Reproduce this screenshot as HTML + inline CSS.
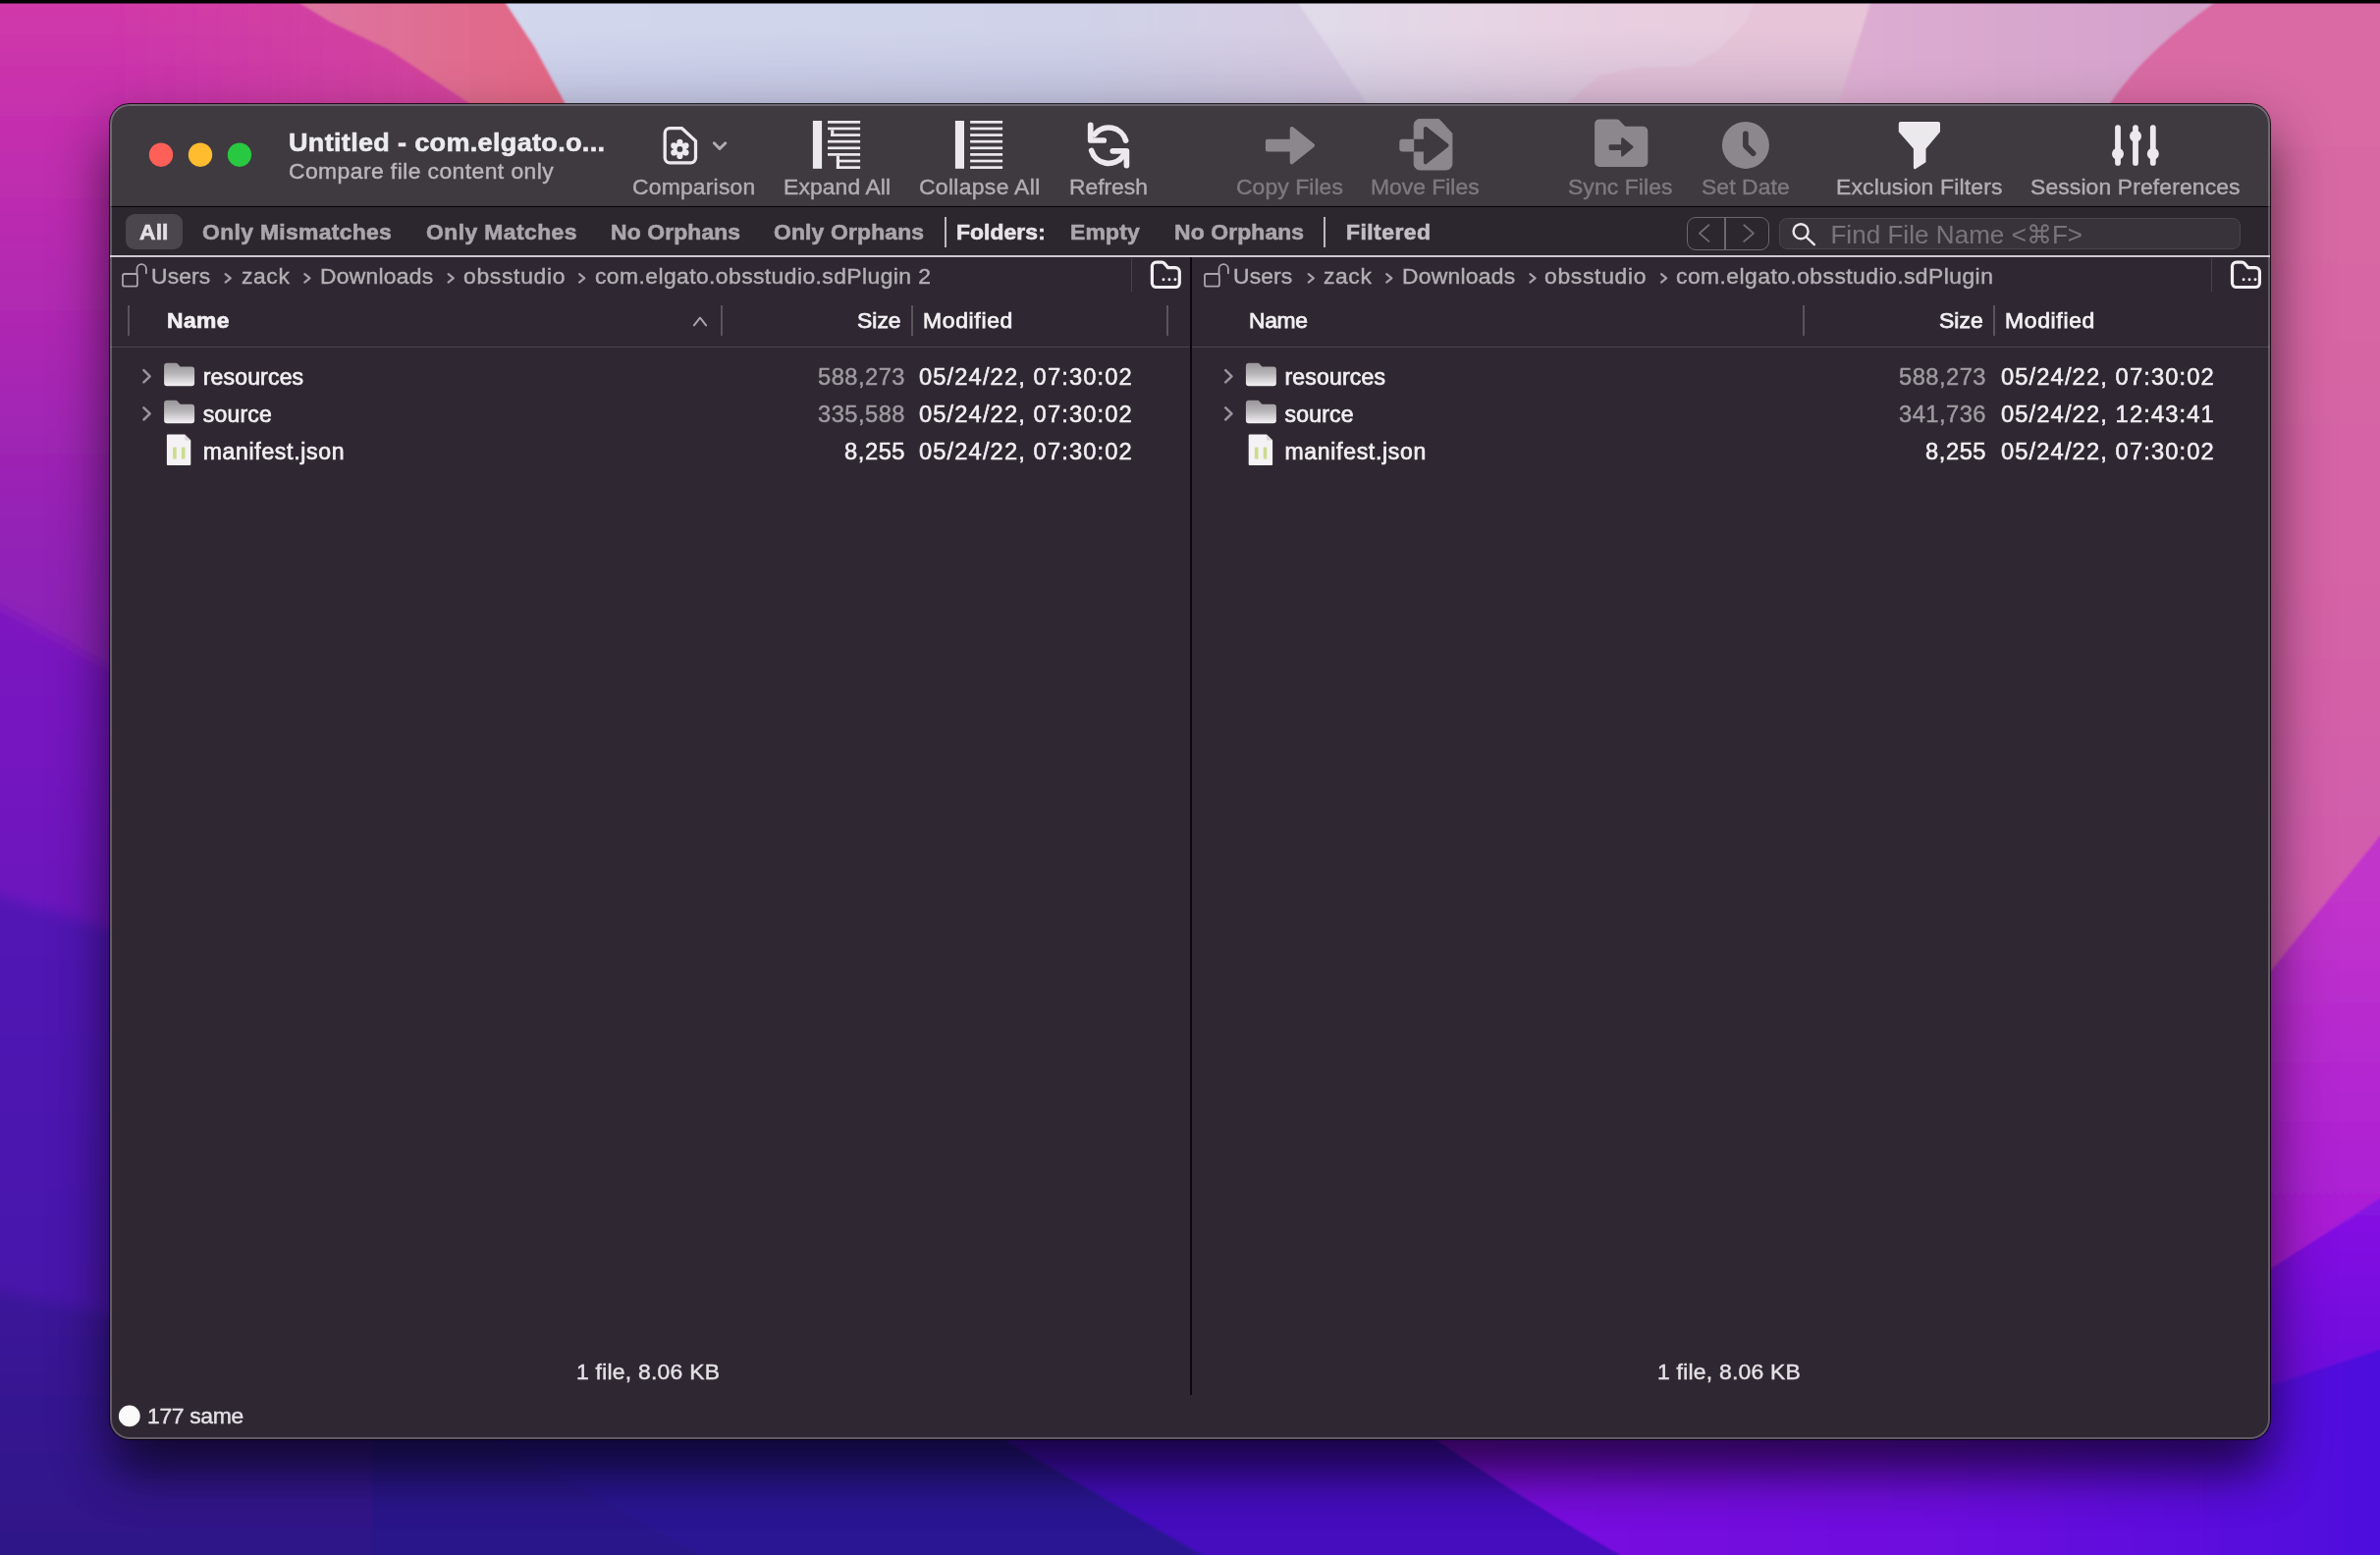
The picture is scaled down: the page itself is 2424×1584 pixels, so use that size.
<!DOCTYPE html>
<html><head><meta charset="utf-8"><title>Compare</title>
<style>
html,body{margin:0;padding:0;}
body{width:2424px;height:1584px;overflow:hidden;position:relative;background:#3a1590;font-family:"Liberation Sans",sans-serif;}
.t{position:absolute;white-space:pre;line-height:1;font-family:"Liberation Sans",sans-serif;transform-origin:0 50%;}
.abs{position:absolute;}
</style></head><body>
<svg class="abs" style="left:0;top:0" width="2424" height="1584" viewBox="0 0 2424 1584">
<defs>
<filter id="bl" x="-10%" y="-10%" width="120%" height="120%"><feGaussianBlur stdDeviation="7"/></filter>
<filter id="bs" x="-5%" y="-5%" width="110%" height="110%"><feGaussianBlur stdDeviation="1.2"/></filter>
<linearGradient id="gL1" gradientUnits="userSpaceOnUse" x1="0" y1="0" x2="0" y2="760"><stop offset="0" stop-color="#d13aa8"/><stop offset="0.13" stop-color="#c730ad"/><stop offset="0.43" stop-color="#ae28b2"/><stop offset="0.72" stop-color="#9322b6"/><stop offset="1" stop-color="#8520ba"/></linearGradient>
<linearGradient id="gL2" gradientUnits="userSpaceOnUse" x1="0" y1="620" x2="0" y2="960"><stop offset="0" stop-color="#7c19c1"/><stop offset="1" stop-color="#6a16be"/></linearGradient>
<linearGradient id="gL3" gradientUnits="userSpaceOnUse" x1="0" y1="910" x2="0" y2="1340"><stop offset="0" stop-color="#5215b5"/><stop offset="1" stop-color="#4712ab"/></linearGradient>
<linearGradient id="gL4" gradientUnits="userSpaceOnUse" x1="0" y1="1310" x2="0" y2="1584"><stop offset="0" stop-color="#3c1599"/><stop offset="1" stop-color="#2e1487"/></linearGradient>
<linearGradient id="gTm" gradientUnits="userSpaceOnUse" x1="112" y1="0" x2="480" y2="0"><stop offset="0" stop-color="#d4479a" stop-opacity="0"/><stop offset="1" stop-color="#d4479a" stop-opacity="0.9"/></linearGradient>
<linearGradient id="gSal" gradientUnits="userSpaceOnUse" x1="300" y1="0" x2="570" y2="0"><stop offset="0" stop-color="#dd75a2"/><stop offset="1" stop-color="#e26784"/></linearGradient>
<linearGradient id="gLav" gradientUnits="userSpaceOnUse" x1="520" y1="0" x2="1900" y2="0"><stop offset="0" stop-color="#d2d7ed"/><stop offset="0.42" stop-color="#cfd2e8"/><stop offset="0.6" stop-color="#d8cde2"/><stop offset="0.8" stop-color="#e1d3e4"/><stop offset="1" stop-color="#e6cbdf"/></linearGradient>
<linearGradient id="gPk" gradientUnits="userSpaceOnUse" x1="1880" y1="0" x2="2260" y2="0"><stop offset="0" stop-color="#ddadd1"/><stop offset="1" stop-color="#d3a0cb"/></linearGradient>
<linearGradient id="gR1" gradientUnits="userSpaceOnUse" x1="0" y1="0" x2="0" y2="1100"><stop offset="0" stop-color="#d96aa3"/><stop offset="0.6" stop-color="#d462a6"/><stop offset="0.82" stop-color="#d25cae"/><stop offset="1" stop-color="#cc52bc"/></linearGradient>
<linearGradient id="gR2" gradientUnits="userSpaceOnUse" x1="0" y1="900" x2="0" y2="1330"><stop offset="0" stop-color="#c235ca"/><stop offset="1" stop-color="#a318d8"/></linearGradient>
<linearGradient id="gR3" gradientUnits="userSpaceOnUse" x1="0" y1="1230" x2="0" y2="1420"><stop offset="0" stop-color="#8612e2"/><stop offset="1" stop-color="#6c0cde"/></linearGradient>
<linearGradient id="gB3" gradientUnits="userSpaceOnUse" x1="1450" y1="0" x2="2424" y2="0"><stop offset="0" stop-color="#7d0ade"/><stop offset="0.55" stop-color="#6d09de"/><stop offset="1" stop-color="#4e08dd"/></linearGradient>
<linearGradient id="gLt" gradientUnits="userSpaceOnUse" x1="1330" y1="0" x2="1900" y2="0"><stop offset="0" stop-color="#e0dcea"/><stop offset="0.27" stop-color="#e6d6e5"/><stop offset="0.52" stop-color="#e8cfe0"/><stop offset="1" stop-color="#e8c9dc"/></linearGradient>
<linearGradient id="gDk" gradientUnits="userSpaceOnUse" x1="0" y1="30" x2="0" y2="110"><stop offset="0" stop-color="#5a4a90" stop-opacity="0"/><stop offset="1" stop-color="#5a4a90" stop-opacity="0.13"/></linearGradient>
</defs>
<rect x="0" y="0" width="2424" height="1584" fill="#3a1596"/>
<!-- left column (soft edges) -->
<g filter="url(#bl)">
<rect x="-60" y="-60" width="800" height="900" fill="url(#gL1)"/>
<polygon points="-60,585 700,1005 700,1700 -60,1700" fill="url(#gL2)"/>
<polygon points="-60,895 1300,1296 1300,1700 -60,1700" fill="url(#gL3)"/>
<polygon points="-60,1301 1300,1604 1300,1700 -60,1700" fill="url(#gL4)"/>
</g>
<!-- bottom band -->
<g filter="url(#bs)">
<polygon points="380,1390 1300,1390 1300,1700 380,1700" fill="#2b158b"/>
<polygon points="470,1390 499,1464 713,1584 800,1640 1300,1640 1300,1390" fill="#2a1593"/>
<polygon points="880,1390 1018,1464 1212,1577 1300,1630 2500,1630 2500,1390" fill="#4511be"/>
<path d="M1355,1390 Q1500,1498 1650,1584 L1750,1640 L2500,1640 L2500,1390 Z" fill="url(#gB3)"/>
</g>
<!-- right column -->
<g filter="url(#bs)">
<rect x="2240" y="-20" width="260" height="1150" fill="url(#gR1)"/>
<polygon points="2240,1079 2500,757 2500,1450 2240,1450" fill="url(#gR2)"/>
<polygon points="2240,1339 2500,1172 2500,1500 2240,1500" fill="url(#gR3)"/>
<polygon points="2240,1435 2500,1350 2500,1700 2240,1700" fill="url(#gB3)"/>
</g>
<!-- top band -->
<g filter="url(#bs)">
<rect x="112" y="-10" width="420" height="150" fill="url(#gTm)"/>
<polygon points="290,-6 336,22 395,50 475,103 540,150 640,150 575,104 544,47 509,-6" fill="url(#gSal)"/>
<polygon points="509,-6 544,47 575,104 600,150 1900,150 1900,-6" fill="url(#gLav)"/>
<polygon points="1316,-6 1391,104 1430,150 1920,150 1920,-6" fill="url(#gLt)" opacity="0.92"/>
<polygon points="1575,150 1597,104 1629,77 1668,69 1720,68 1750,51 1779,21 1790,-6 1920,-6 1880,150" fill="#e6c3d7" opacity="0.85"/>
<polygon points="533,30 544,47 575,104 600,150 2000,150 2000,30" fill="url(#gDk)"/>
<polygon points="1908,-6 1873,104 1860,150 2300,150 2300,-6" fill="url(#gPk)"/>
<path d="M2268,-6 Q2185,50 2150,104 L2120,150 L2500,150 L2500,-6 Z" fill="#d96aa4"/>
</g>
<!-- black strip on top -->
<rect x="0" y="0" width="2424" height="3.5" fill="#000"/>
</svg>

<div class="abs" style="left:112px;top:106px;width:2200px;height:1360px;border-radius:20px;box-shadow:0 0 0 1px rgba(0,0,0,.8),0 38px 50px -8px rgba(0,0,0,.52),0 24px 60px 6px rgba(0,0,0,.29);"></div>
<div class="abs" style="left:112px;top:106px;width:2200px;height:1360px;border-radius:20px;overflow:hidden;background:#2f2731;">
<div class="abs" style="left:-112px;top:-106px;width:2424px;height:1584px;">
  <div class="abs" style="left:112px;top:105px;width:2200px;height:105px;background:#3e3a40;"></div>
  <div class="abs" style="left:112px;top:209.6px;width:2200px;height:1.6px;background:#050306;"></div>
  <div class="abs" style="left:112px;top:211.2px;width:2200px;height:49px;background:#2c262e;"></div>
  <div class="abs" style="left:112px;top:260px;width:2200px;height:2.2px;background:#cfc9d1;"></div>
  <div class="abs" style="left:112px;top:352.6px;width:2200px;height:1.3px;background:#4c464f;"></div>
  <div class="abs" style="left:1211.6px;top:262.2px;width:2.5px;height:1159px;background:#0b090c;"></div>
  <!-- All pill -->
  <div class="abs" style="left:128px;top:218px;width:58px;height:36px;border-radius:9px;background:#4b454e;"></div>
  <!-- filter separators -->
  <div class="abs" style="left:962px;top:221.4px;width:2px;height:31px;background:#bdb9bf;"></div>
  <div class="abs" style="left:1347.7px;top:221.4px;width:2px;height:31px;background:#bdb9bf;"></div>
  <!-- nav buttons -->
  <div class="abs" style="left:1718px;top:220.6px;width:83.6px;height:34.4px;border-radius:9px;box-sizing:border-box;border:1.8px solid #6c676e;"></div>
  <div class="abs" style="left:1756px;top:221px;width:1.8px;height:33.6px;background:#6c676e;"></div>
  <!-- search -->
  <div class="abs" style="left:1812px;top:222px;width:470px;height:31.7px;border-radius:8px;box-sizing:border-box;background:#38323a;border:1px solid #4a444c;"></div>
  <!-- path bar separators -->
  <div class="abs" style="left:1152px;top:263px;width:1.4px;height:34px;background:#47424b;"></div>
  <div class="abs" style="left:2252px;top:263px;width:1.4px;height:34px;background:#47424b;"></div>
  <!-- header separators -->
  <div class="abs" style="left:130px;top:310.6px;width:1.5px;height:31px;background:#5a545d;"></div>
  <div class="abs" style="left:734.2px;top:310.6px;width:1.5px;height:31px;background:#5a545d;"></div>
  <div class="abs" style="left:928.3px;top:310.6px;width:1.5px;height:31px;background:#5a545d;"></div>
  <div class="abs" style="left:1188.2px;top:310.6px;width:1.5px;height:31px;background:#5a545d;"></div>
  <div class="abs" style="left:1836.2px;top:310.6px;width:1.5px;height:31px;background:#5a545d;"></div>
  <div class="abs" style="left:2030.3px;top:310.6px;width:1.5px;height:31px;background:#5a545d;"></div>
</div>
<div class="abs" style="left:0;top:0;width:2200px;height:1360px;border-radius:20px;box-shadow:inset 0 0 0 2px rgba(238,228,246,.27);"></div>
</div>

<svg class="abs" style="left:0;top:0" width="2424" height="1584" viewBox="0 0 2424 1584">
<defs><linearGradient id="gFold" x1="0" y1="0" x2="0" y2="1"><stop offset="0" stop-color="#979598"/><stop offset="0.45" stop-color="#b6b4b7"/><stop offset="1" stop-color="#f4f2f5"/></linearGradient></defs>
<circle cx="164" cy="157.7" r="12.2" fill="#fe5f57"/>
<circle cx="204" cy="157.7" r="12.2" fill="#febc2e"/>
<circle cx="244" cy="157.7" r="12.2" fill="#28c840"/>
<path d="M682.2,130.7 H694.6 L708.5,143.6 V160.8 a5,5 0 0 1 -5,5 H682.2 a5,5 0 0 1 -5,-5 V135.7 a5,5 0 0 1 5,-5 Z" fill="none" stroke="#ebe9ec" stroke-width="3.3" stroke-linejoin="round"/>
<circle cx="692.4" cy="151.9" r="6.6" fill="#ebe9ec"/>
<circle cx="698.46" cy="155.40" r="3.1" fill="#ebe9ec"/>
<circle cx="692.40" cy="158.90" r="3.1" fill="#ebe9ec"/>
<circle cx="686.34" cy="155.40" r="3.1" fill="#ebe9ec"/>
<circle cx="686.34" cy="148.40" r="3.1" fill="#ebe9ec"/>
<circle cx="692.40" cy="144.90" r="3.1" fill="#ebe9ec"/>
<circle cx="698.46" cy="148.40" r="3.1" fill="#ebe9ec"/>
<circle cx="692.4" cy="151.9" r="2.9" fill="#3e3a40"/>
<path d="M727.3,145.8 L733,151.5 L738.8,145.8" fill="none" stroke="#b1aeb3" stroke-width="3" stroke-linecap="round" stroke-linejoin="round"/>
<g fill="#ebe9ec">
<rect x="827.9" y="123" width="9.2" height="48.8"/>
<rect x="843.0" y="123.00" width="33.1" height="2.7"/>
<rect x="843.0" y="129.61" width="33.1" height="2.7"/>
<rect x="846.2" y="136.22" width="29.9" height="2.7"/>
<rect x="843.0" y="142.83" width="33.1" height="2.7"/>
<rect x="843.0" y="149.44" width="33.1" height="2.7"/>
<rect x="843.0" y="156.05" width="33.1" height="2.7"/>
<rect x="851.9" y="162.66" width="24.2" height="2.7"/>
<rect x="851.9" y="169.27" width="24.2" height="2.7"/>
<rect x="846.2" y="132.31" width="3.1" height="6.61"/>
<rect x="851.9" y="158.75" width="3.1" height="13.22"/>
<rect x="972.9" y="123" width="9.1" height="48.8"/>
<rect x="988.1" y="123.00" width="33" height="2.7"/>
<rect x="988.1" y="129.61" width="33" height="2.7"/>
<rect x="988.1" y="136.22" width="33" height="2.7"/>
<rect x="988.1" y="142.83" width="33" height="2.7"/>
<rect x="988.1" y="149.44" width="33" height="2.7"/>
<rect x="988.1" y="156.05" width="33" height="2.7"/>
<rect x="988.1" y="162.66" width="33" height="2.7"/>
<rect x="988.1" y="169.27" width="33" height="2.7"/>
</g>
<g fill="none" stroke="#ebe9ec" stroke-width="5.7" stroke-linecap="round" stroke-linejoin="round">
<path d="M1114.73,137.03 A18.2,18.2 0 0 1 1146.58,143.12"/>
<path d="M1111.68,153.48 A18.2,18.2 0 0 0 1143.94,158.73"/>
<path d="M1110.7,127.3 V143 H1124.3"/>
<path d="M1133.3,153.8 H1147.4 V168.6"/>
</g>
<g fill="#8b878c" stroke="#8b878c" stroke-width="4" stroke-linejoin="round">
<rect x="1290.9" y="143.8" width="25" height="8.7"/>
<path d="M1315.7,130.9 L1337,148.1 L1315.7,165.3 Z"/>
</g>
<path d="M1446.2,121.4 H1465.6 L1478.9,135.9 V167 a6,6 0 0 1 -6,6 H1446.2 a6,6 0 0 1 -6,-6 V127.4 a6,6 0 0 1 6,-6 Z" fill="#8b878c" stroke="#8b878c" stroke-width="1" stroke-linejoin="round"/>
<g fill="#3e3a40" stroke="#3e3a40" stroke-width="4" stroke-linejoin="round">
<rect x="1436" y="143.8" width="16" height="8.7"/>
<path d="M1451.9,130.9 L1473.6,148.1 L1451.9,165.3 Z"/>
</g>
<path d="M1428.3,141.8 H1440.2 V154.5 H1428.3 a3,3 0 0 1 -3,-3 V144.8 a3,3 0 0 1 3,-3 Z" fill="#8b878c"/>
<path d="M1629.1,121.4 H1646.5 a4,4 0 0 1 3,1.3 L1655.2,128.7 H1673.3 a5,5 0 0 1 5,5 V164.9 a5,5 0 0 1 -5,5 H1629.1 a5,5 0 0 1 -5,-5 V126.4 a5,5 0 0 1 5,-5 Z" fill="#8b878c"/>
<g fill="#3e3a40" stroke="#3e3a40" stroke-width="2.6" stroke-linejoin="round">
<rect x="1639.9" y="148.5" width="13" height="3.1"/>
<path d="M1652.4,141.5 L1662.2,149.8 L1652.4,158.1 Z"/>
</g>
<circle cx="1777.9" cy="147.9" r="24" fill="#8b878c"/>
<path d="M1777.9,136.3 V148.6 L1785.6,156.2" fill="none" stroke="#3e3a40" stroke-width="5.7" stroke-linecap="round" stroke-linejoin="round"/>
<path d="M1935.8,123.9 H1974 a2,2 0 0 1 2,2 V134.2 L1961.5,151.6 V165.2 L1951,172 a1.4,1.4 0 0 1 -2.1,-1.2 V151.6 L1933.8,134.2 V125.9 a2,2 0 0 1 2,-2 Z" fill="#ebe9ec"/>
<g stroke="#ebe9ec" stroke-width="5.8" stroke-linecap="round">
<path d="M2157,130.1 V165.9"/>
<path d="M2175,130.1 V165.9"/>
<path d="M2192.8,130.1 V165.9"/>
</g>
<circle cx="2157" cy="156.8" r="6" fill="#ebe9ec"/>
<circle cx="2175" cy="138.8" r="6" fill="#ebe9ec"/>
<circle cx="2192.8" cy="156.8" r="6" fill="#ebe9ec"/>
<g fill="none" stroke="#706b73" stroke-width="1.9" stroke-linecap="round" stroke-linejoin="round">
<path d="M1740.4,229.3 L1730.9,237.6 L1740.4,245.9"/>
<path d="M1776.3,229.3 L1785.9,237.6 L1776.3,245.9"/>
</g>
<g fill="none" stroke="#e9e7eb" stroke-width="2.4" stroke-linecap="round">
<circle cx="1834.1" cy="235.7" r="7.5"/>
<path d="M1839.7,241.5 L1847.8,249.2"/>
</g>
<g fill="none" stroke="#aaa5ad" stroke-width="1.8" stroke-linecap="round">
<rect x="125.0" y="279" width="14.9" height="12.7" rx="2"/>
<path d="M139.5,279 V273.9 a4.7,4.7 0 0 1 9.4,0 V278.3"/>
</g>
<g fill="none" stroke="#aaa5ad" stroke-width="1.8" stroke-linecap="round">
<rect x="1227.0" y="279" width="14.9" height="12.7" rx="2"/>
<path d="M1241.5,279 V273.9 a4.7,4.7 0 0 1 9.4,0 V278.3"/>
</g>
<g fill="none" stroke="#a6a1a9" stroke-width="2.2" stroke-linecap="round" stroke-linejoin="round">
<path d="M229.6,279.2 L234.8,283.4 L229.6,287.6"/>
<path d="M310.3,279.2 L315.5,283.4 L310.3,287.6"/>
<path d="M456.6,279.2 L461.8,283.4 L456.6,287.6"/>
<path d="M590.1,279.2 L595.3,283.4 L590.1,287.6"/>
<path d="M1332.7,279.2 L1337.9,283.4 L1332.7,287.6"/>
<path d="M1412.2,279.2 L1417.4,283.4 L1412.2,287.6"/>
<path d="M1558.4,279.2 L1563.6,283.4 L1558.4,287.6"/>
<path d="M1692.0,279.2 L1697.2,283.4 L1692.0,287.6"/>
</g>
<path d="M1177.6,267.1 H1183.5 a3,3 0 0 1 2.2,1 L1189.6,272.6 H1197.1 a4.2,4.2 0 0 1 4.2,4.2 V288.3 a4.2,4.2 0 0 1 -4.2,4.2 H1177.6 a4.2,4.2 0 0 1 -4.2,-4.2 V271.3 a4.2,4.2 0 0 1 4.2,-4.2 Z" fill="none" stroke="#f1eff2" stroke-width="3.2" stroke-linejoin="round"/>
<circle cx="1185.0" cy="284.7" r="1.45" fill="#f1eff2"/>
<circle cx="1190.9" cy="284.7" r="1.45" fill="#f1eff2"/>
<circle cx="1196.9" cy="284.7" r="1.45" fill="#f1eff2"/>
<path d="M2277.7,267.1 H2283.6 a3,3 0 0 1 2.2,1 L2289.7,272.6 H2297.2 a4.2,4.2 0 0 1 4.2,4.2 V288.3 a4.2,4.2 0 0 1 -4.2,4.2 H2277.7 a4.2,4.2 0 0 1 -4.2,-4.2 V271.3 a4.2,4.2 0 0 1 4.2,-4.2 Z" fill="none" stroke="#f1eff2" stroke-width="3.2" stroke-linejoin="round"/>
<circle cx="2285.1" cy="284.7" r="1.45" fill="#f1eff2"/>
<circle cx="2291.0" cy="284.7" r="1.45" fill="#f1eff2"/>
<circle cx="2297.0" cy="284.7" r="1.45" fill="#f1eff2"/>
<path d="M706.9,331.4 L713,323.7 L719.1,331.4" fill="none" stroke="#a9a5ab" stroke-width="2" stroke-linecap="round" stroke-linejoin="round"/>
<path d="M146.4,377.2 L152.7,383.3 L146.4,389.4" fill="none" stroke="#9a949c" stroke-width="2.5" stroke-linecap="round" stroke-linejoin="round"/>
<path d="M169.6,369.7 h9.5 a2,2 0 0 1 1.5,.6 l3,3.3 h11.5 a3,3 0 0 1 3,3 v13.6 a3,3 0 0 1 -3,3 h-25 a3,3 0 0 1 -3,-3 v-17.5 a3,3 0 0 1 3,-3 Z" fill="url(#gFold)"/>
<path d="M146.4,415.3 L152.7,421.4 L146.4,427.5" fill="none" stroke="#9a949c" stroke-width="2.5" stroke-linecap="round" stroke-linejoin="round"/>
<path d="M169.6,407.8 h9.5 a2,2 0 0 1 1.5,.6 l3,3.3 h11.5 a3,3 0 0 1 3,3 v13.6 a3,3 0 0 1 -3,3 h-25 a3,3 0 0 1 -3,-3 v-17.5 a3,3 0 0 1 3,-3 Z" fill="url(#gFold)"/>
<path d="M170.9,442.4 h17.2 l6.2,6.2 v24.3 a1,1 0 0 1 -1,1 h-22.4 a1,1 0 0 1 -1,-1 v-29.5 a1,1 0 0 1 1,-1 Z" fill="#f4f2f4"/>
<path d="M188.1,442.4 v6.2 h6.2 Z" fill="#d9d6da"/>
<rect x="176.1" y="455.6" width="3.6" height="12" rx="1.2" fill="#cbdc8c"/>
<rect x="184.9" y="455.6" width="3.6" height="12" rx="1.2" fill="#cbdc8c"/>
<path d="M1248.2,377.2 L1254.5,383.3 L1248.2,389.4" fill="none" stroke="#9a949c" stroke-width="2.5" stroke-linecap="round" stroke-linejoin="round"/>
<path d="M1271.4,369.7 h9.5 a2,2 0 0 1 1.5,.6 l3,3.3 h11.5 a3,3 0 0 1 3,3 v13.6 a3,3 0 0 1 -3,3 h-25 a3,3 0 0 1 -3,-3 v-17.5 a3,3 0 0 1 3,-3 Z" fill="url(#gFold)"/>
<path d="M1248.2,415.3 L1254.5,421.4 L1248.2,427.5" fill="none" stroke="#9a949c" stroke-width="2.5" stroke-linecap="round" stroke-linejoin="round"/>
<path d="M1271.4,407.8 h9.5 a2,2 0 0 1 1.5,.6 l3,3.3 h11.5 a3,3 0 0 1 3,3 v13.6 a3,3 0 0 1 -3,3 h-25 a3,3 0 0 1 -3,-3 v-17.5 a3,3 0 0 1 3,-3 Z" fill="url(#gFold)"/>
<path d="M1272.7,442.4 h17.2 l6.2,6.2 v24.3 a1,1 0 0 1 -1,1 h-22.4 a1,1 0 0 1 -1,-1 v-29.5 a1,1 0 0 1 1,-1 Z" fill="#f4f2f4"/>
<path d="M1289.9,442.4 v6.2 h6.2 Z" fill="#d9d6da"/>
<rect x="1277.9" y="455.6" width="3.6" height="12" rx="1.2" fill="#cbdc8c"/>
<rect x="1286.7" y="455.6" width="3.6" height="12" rx="1.2" fill="#cbdc8c"/>
<circle cx="131.8" cy="1442.4" r="10.9" fill="#fbfafb"/>
</svg>
<div class="abs" style="left:0;top:0;width:2424px;height:1584px;will-change:transform;">
<span class="t" style="left:294.0px;top:132.0px;font-size:26px;color:#ecebed;letter-spacing:0.31px;font-weight:700;-webkit-text-stroke:0.60px #ecebed;transform:scaleX(1.040);">Untitled - com.elgato.o...</span>
<span class="t" style="left:294.1px;top:164.0px;font-size:22px;color:#bab7bc;letter-spacing:0.41px;-webkit-text-stroke:0.42px #bab7bc;transform:scaleX(1.040);">Compare file content only</span>
<span class="t" style="left:644.0px;top:180.0px;font-size:22px;color:#b1aeb3;letter-spacing:0.20px;-webkit-text-stroke:0.42px #b1aeb3;transform:scaleX(1.040);">Comparison</span>
<span class="t" style="left:798.0px;top:180.0px;font-size:22px;color:#b1aeb3;letter-spacing:0.11px;-webkit-text-stroke:0.42px #b1aeb3;transform:scaleX(1.040);">Expand All</span>
<span class="t" style="left:936.1px;top:180.0px;font-size:22px;color:#b1aeb3;letter-spacing:0.32px;-webkit-text-stroke:0.42px #b1aeb3;transform:scaleX(1.040);">Collapse All</span>
<span class="t" style="left:1089.3px;top:180.0px;font-size:22px;color:#b1aeb3;letter-spacing:-0.04px;-webkit-text-stroke:0.42px #b1aeb3;transform:scaleX(1.040);">Refresh</span>
<span class="t" style="left:1259.0px;top:180.0px;font-size:22px;color:#7d797f;letter-spacing:0.08px;-webkit-text-stroke:0.42px #7d797f;transform:scaleX(1.040);">Copy Files</span>
<span class="t" style="left:1396.4px;top:180.0px;font-size:22px;color:#7d797f;letter-spacing:0.00px;-webkit-text-stroke:0.42px #7d797f;transform:scaleX(1.040);">Move Files</span>
<span class="t" style="left:1596.7px;top:180.0px;font-size:22px;color:#7d797f;letter-spacing:0.10px;-webkit-text-stroke:0.42px #7d797f;transform:scaleX(1.040);">Sync Files</span>
<span class="t" style="left:1733.1px;top:180.0px;font-size:22px;color:#7d797f;letter-spacing:0.10px;-webkit-text-stroke:0.42px #7d797f;transform:scaleX(1.040);">Set Date</span>
<span class="t" style="left:1870.3px;top:180.0px;font-size:22px;color:#b1aeb3;letter-spacing:0.17px;-webkit-text-stroke:0.42px #b1aeb3;transform:scaleX(1.040);">Exclusion Filters</span>
<span class="t" style="left:2067.8px;top:180.0px;font-size:22px;color:#b1aeb3;letter-spacing:0.13px;-webkit-text-stroke:0.42px #b1aeb3;transform:scaleX(1.040);">Session Preferences</span>
<span class="t" style="left:141.9px;top:226.0px;font-size:22px;color:#e2dfe4;letter-spacing:0.10px;font-weight:700;-webkit-text-stroke:0.60px #e2dfe4;transform:scaleX(1.040);">All</span>
<span class="t" style="left:206.1px;top:226.0px;font-size:22px;color:#aaa6ac;letter-spacing:0.32px;font-weight:700;-webkit-text-stroke:0.60px #aaa6ac;transform:scaleX(1.040);">Only Mismatches</span>
<span class="t" style="left:433.8px;top:226.0px;font-size:22px;color:#aaa6ac;letter-spacing:0.41px;font-weight:700;-webkit-text-stroke:0.60px #aaa6ac;transform:scaleX(1.040);">Only Matches</span>
<span class="t" style="left:621.8px;top:226.0px;font-size:22px;color:#aaa6ac;letter-spacing:0.12px;font-weight:700;-webkit-text-stroke:0.60px #aaa6ac;transform:scaleX(1.040);">No Orphans</span>
<span class="t" style="left:788.1px;top:226.0px;font-size:22px;color:#aaa6ac;letter-spacing:0.15px;font-weight:700;-webkit-text-stroke:0.60px #aaa6ac;transform:scaleX(1.040);">Only Orphans</span>
<span class="t" style="left:973.9px;top:226.0px;font-size:22px;color:#e8e5ea;letter-spacing:0.07px;font-weight:700;-webkit-text-stroke:0.60px #e8e5ea;transform:scaleX(1.040);">Folders:</span>
<span class="t" style="left:1090.1px;top:226.0px;font-size:22px;color:#aaa6ac;letter-spacing:0.20px;font-weight:700;-webkit-text-stroke:0.60px #aaa6ac;transform:scaleX(1.040);">Empty</span>
<span class="t" style="left:1195.8px;top:226.0px;font-size:22px;color:#aaa6ac;letter-spacing:0.12px;font-weight:700;-webkit-text-stroke:0.60px #aaa6ac;transform:scaleX(1.040);">No Orphans</span>
<span class="t" style="left:1370.5px;top:226.0px;font-size:22px;color:#c2bec4;letter-spacing:0.46px;font-weight:700;-webkit-text-stroke:0.60px #c2bec4;transform:scaleX(1.040);">Filtered</span>
<span class="t" style="left:1864.4px;top:226.0px;font-size:26px;color:#77737a;letter-spacing:0.05px;-webkit-text-stroke:0.10px #77737a;">Find File Name &lt;⌘F&gt;</span>
<span class="t" style="left:154.0px;top:271.0px;font-size:22px;color:#b3afb5;letter-spacing:0.12px;-webkit-text-stroke:0.42px #b3afb5;transform:scaleX(1.040);">Users</span>
<span class="t" style="left:246.0px;top:271.0px;font-size:22px;color:#b3afb5;letter-spacing:0.58px;-webkit-text-stroke:0.42px #b3afb5;transform:scaleX(1.040);">zack</span>
<span class="t" style="left:325.9px;top:271.0px;font-size:22px;color:#b3afb5;letter-spacing:0.24px;-webkit-text-stroke:0.42px #b3afb5;transform:scaleX(1.040);">Downloads</span>
<span class="t" style="left:471.6px;top:271.0px;font-size:22px;color:#b3afb5;letter-spacing:0.67px;-webkit-text-stroke:0.42px #b3afb5;transform:scaleX(1.040);">obsstudio</span>
<span class="t" style="left:1255.7px;top:271.0px;font-size:22px;color:#b3afb5;letter-spacing:0.12px;-webkit-text-stroke:0.42px #b3afb5;transform:scaleX(1.040);">Users</span>
<span class="t" style="left:1347.7px;top:271.0px;font-size:22px;color:#b3afb5;letter-spacing:0.58px;-webkit-text-stroke:0.42px #b3afb5;transform:scaleX(1.040);">zack</span>
<span class="t" style="left:1427.6px;top:271.0px;font-size:22px;color:#b3afb5;letter-spacing:0.24px;-webkit-text-stroke:0.42px #b3afb5;transform:scaleX(1.040);">Downloads</span>
<span class="t" style="left:1573.3px;top:271.0px;font-size:22px;color:#b3afb5;letter-spacing:0.67px;-webkit-text-stroke:0.42px #b3afb5;transform:scaleX(1.040);">obsstudio</span>
<span class="t" style="left:605.6px;top:271.0px;font-size:22px;color:#b3afb5;letter-spacing:0.40px;-webkit-text-stroke:0.42px #b3afb5;transform:scaleX(1.040);">com.elgato.obsstudio.sdPlugin 2</span>
<span class="t" style="left:1707.4px;top:271.0px;font-size:22px;color:#b3afb5;letter-spacing:0.43px;-webkit-text-stroke:0.42px #b3afb5;transform:scaleX(1.040);">com.elgato.obsstudio.sdPlugin</span>
<span class="t" style="left:169.6px;top:316.0px;font-size:22px;color:#f2f0f3;letter-spacing:0.40px;font-weight:700;-webkit-text-stroke:0.60px #f2f0f3;transform:scaleX(1.040);">Name</span>
<span class="t" style="left:873.4px;top:316.0px;font-size:22px;color:#f2f0f3;letter-spacing:0.02px;-webkit-text-stroke:0.75px #f2f0f3;transform:scaleX(1.040);">Size</span>
<span class="t" style="left:940.2px;top:316.0px;font-size:22px;color:#f2f0f3;letter-spacing:0.66px;-webkit-text-stroke:0.75px #f2f0f3;transform:scaleX(1.040);">Modified</span>
<span class="t" style="left:1272.0px;top:316.0px;font-size:22px;color:#f2f0f3;letter-spacing:-0.34px;-webkit-text-stroke:0.75px #f2f0f3;transform:scaleX(1.040);">Name</span>
<span class="t" style="left:1975.1px;top:316.0px;font-size:22px;color:#f2f0f3;letter-spacing:0.05px;-webkit-text-stroke:0.75px #f2f0f3;transform:scaleX(1.040);">Size</span>
<span class="t" style="left:2041.9px;top:316.0px;font-size:22px;color:#f2f0f3;letter-spacing:0.66px;-webkit-text-stroke:0.75px #f2f0f3;transform:scaleX(1.040);">Modified</span>
<span class="t" style="left:206.7px;top:373.0px;font-size:23px;color:#f1eff2;letter-spacing:0.18px;-webkit-text-stroke:0.70px #f1eff2;">resources</span>
<span class="t" style="left:206.7px;top:411.0px;font-size:23px;color:#f1eff2;letter-spacing:0.22px;-webkit-text-stroke:0.70px #f1eff2;">source</span>
<span class="t" style="left:206.7px;top:449.0px;font-size:23px;color:#f1eff2;letter-spacing:0.69px;-webkit-text-stroke:0.70px #f1eff2;">manifest.json</span>
<span class="t" style="left:832.5px;top:373.0px;font-size:23px;color:#9e9aa0;letter-spacing:0.47px;-webkit-text-stroke:0.45px #9e9aa0;transform:scaleX(1.030);">588,273</span>
<span class="t" style="left:832.5px;top:411.0px;font-size:23px;color:#9e9aa0;letter-spacing:0.47px;-webkit-text-stroke:0.45px #9e9aa0;transform:scaleX(1.030);">335,588</span>
<span class="t" style="left:859.5px;top:449.0px;font-size:23px;color:#f1eff2;letter-spacing:0.55px;-webkit-text-stroke:0.55px #f1eff2;transform:scaleX(1.030);">8,255</span>
<span class="t" style="left:935.9px;top:373.0px;font-size:23px;color:#f1eff2;letter-spacing:1.09px;-webkit-text-stroke:0.55px #f1eff2;transform:scaleX(1.030);">05/24/22, 07:30:02</span>
<span class="t" style="left:935.9px;top:411.0px;font-size:23px;color:#f1eff2;letter-spacing:1.09px;-webkit-text-stroke:0.55px #f1eff2;transform:scaleX(1.030);">05/24/22, 07:30:02</span>
<span class="t" style="left:935.9px;top:449.0px;font-size:23px;color:#f1eff2;letter-spacing:1.09px;-webkit-text-stroke:0.55px #f1eff2;transform:scaleX(1.030);">05/24/22, 07:30:02</span>
<span class="t" style="left:1308.5px;top:373.0px;font-size:23px;color:#f1eff2;letter-spacing:0.18px;-webkit-text-stroke:0.70px #f1eff2;">resources</span>
<span class="t" style="left:1308.5px;top:411.0px;font-size:23px;color:#f1eff2;letter-spacing:0.22px;-webkit-text-stroke:0.70px #f1eff2;">source</span>
<span class="t" style="left:1308.5px;top:449.0px;font-size:23px;color:#f1eff2;letter-spacing:0.69px;-webkit-text-stroke:0.70px #f1eff2;">manifest.json</span>
<span class="t" style="left:1934.3px;top:373.0px;font-size:23px;color:#9e9aa0;letter-spacing:0.47px;-webkit-text-stroke:0.45px #9e9aa0;transform:scaleX(1.030);">588,273</span>
<span class="t" style="left:1934.3px;top:411.0px;font-size:23px;color:#9e9aa0;letter-spacing:0.47px;-webkit-text-stroke:0.45px #9e9aa0;transform:scaleX(1.030);">341,736</span>
<span class="t" style="left:1961.3px;top:449.0px;font-size:23px;color:#f1eff2;letter-spacing:0.55px;-webkit-text-stroke:0.55px #f1eff2;transform:scaleX(1.030);">8,255</span>
<span class="t" style="left:2037.7px;top:373.0px;font-size:23px;color:#f1eff2;letter-spacing:1.09px;-webkit-text-stroke:0.55px #f1eff2;transform:scaleX(1.030);">05/24/22, 07:30:02</span>
<span class="t" style="left:2037.7px;top:411.0px;font-size:23px;color:#f1eff2;letter-spacing:1.09px;-webkit-text-stroke:0.55px #f1eff2;transform:scaleX(1.030);">05/24/22, 12:43:41</span>
<span class="t" style="left:2037.7px;top:449.0px;font-size:23px;color:#f1eff2;letter-spacing:1.09px;-webkit-text-stroke:0.55px #f1eff2;transform:scaleX(1.030);">05/24/22, 07:30:02</span>
<span class="t" style="left:586.7px;top:1387.0px;font-size:22px;color:#e4e1e6;letter-spacing:0.24px;-webkit-text-stroke:0.42px #e4e1e6;transform:scaleX(1.040);">1 file, 8.06 KB</span>
<span class="t" style="left:1688.3px;top:1387.0px;font-size:22px;color:#e4e1e6;letter-spacing:0.23px;-webkit-text-stroke:0.42px #e4e1e6;transform:scaleX(1.040);">1 file, 8.06 KB</span>
<span class="t" style="left:149.7px;top:1432.0px;font-size:22px;color:#e4e1e6;letter-spacing:-0.32px;-webkit-text-stroke:0.42px #e4e1e6;transform:scaleX(1.040);">177 same</span>
</div>
</body></html>
